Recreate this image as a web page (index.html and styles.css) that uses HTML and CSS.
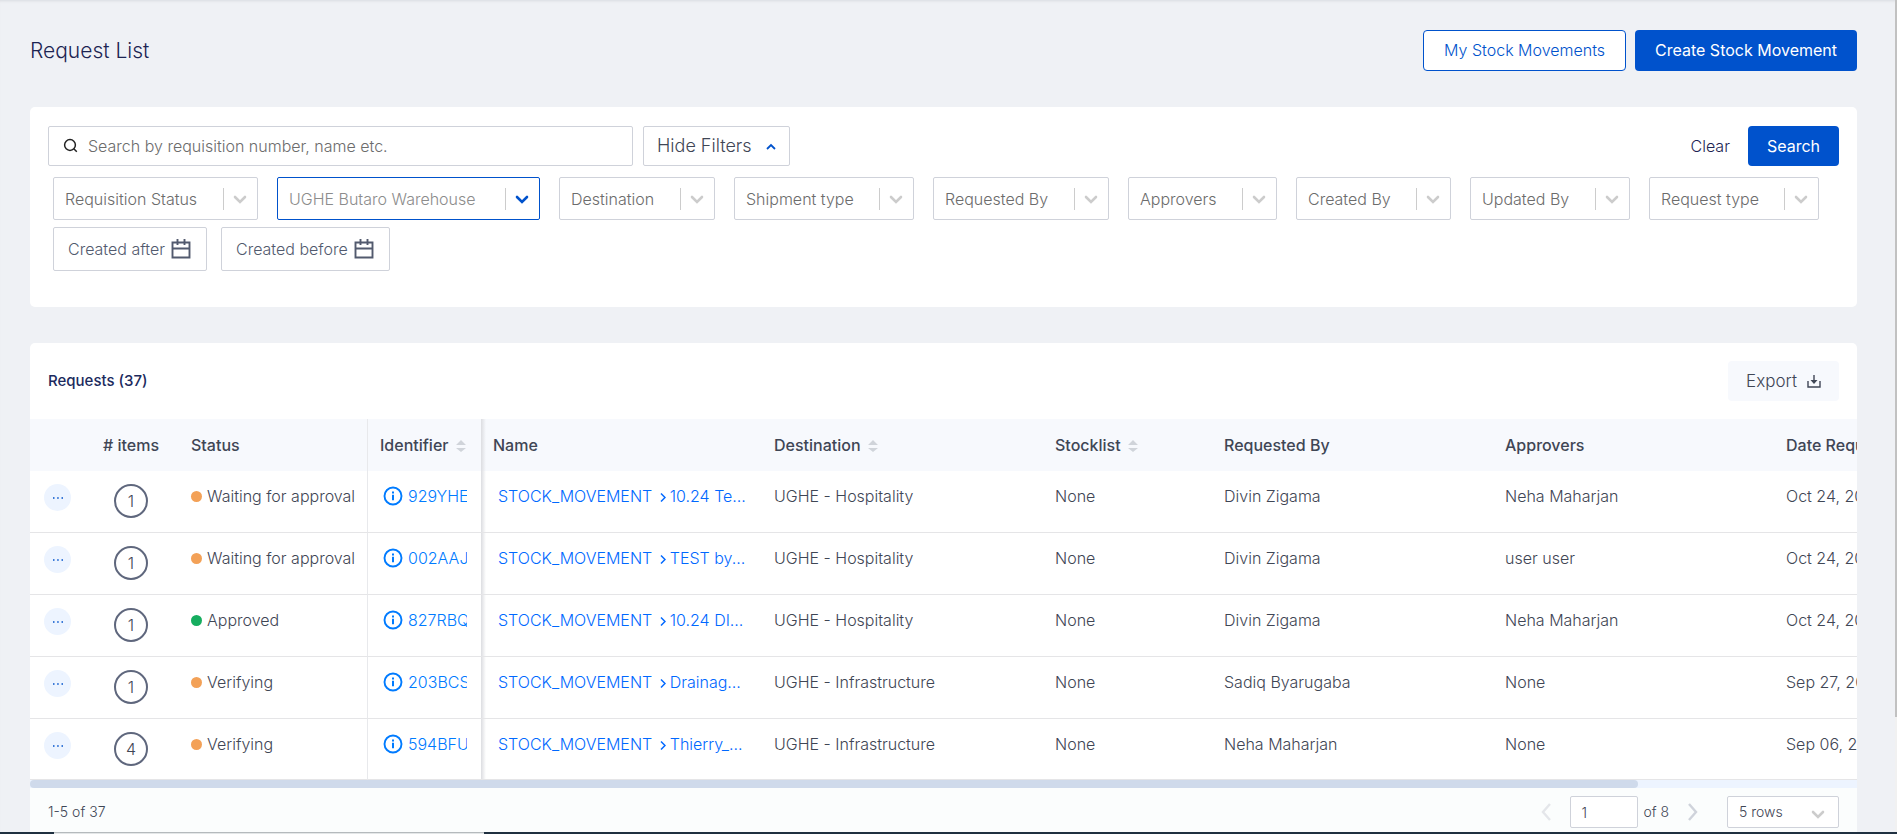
FILE: index.html
```html
<!DOCTYPE html>
<html lang="en">
<head>
  <meta charset="UTF-8">
  <meta name="viewport" content="width=device-width, initial-scale=1.0">
  <title>Request List</title>
  <link rel="stylesheet" href="styles.css">
</head>
<body>
  <!-- shared icons -->
  <svg class="icon-defs" width="0" height="0" aria-hidden="true">
    <symbol id="chevron" viewBox="0 0 14 9"><path d="M2 2l5 5 5-5" fill="none" stroke="currentColor" stroke-width="2.6" stroke-linecap="round"/></symbol>
    <symbol id="calendar" viewBox="0 0 20 20"><path d="M1.5 3.5h17v15h-17zM1.5 9.5h17M6.5 0v6M13.5 0v6" fill="none" stroke="currentColor" stroke-width="1.9"/></symbol>
    <symbol id="info" viewBox="0 0 20 20"><circle cx="10" cy="10" r="8.5" fill="none" stroke="currentColor" stroke-width="1.9"/><path d="M10 8.8v5.4M10 5.4v2" stroke="currentColor" stroke-width="2"/></symbol>
    <symbol id="sort" viewBox="0 0 10 12"><path d="M0 5l5-5 5 5zM0 8h10l-5 4z" fill="currentColor"/></symbol>
    <symbol id="crumb" viewBox="0 0 6 10"><path d="M1 1.500l4 4-4 4" fill="none" stroke="currentColor" stroke-width="1.500"/></symbol>
    <symbol id="dots" viewBox="0 0 12 4"><path d="M1 1.300h1.500v1.500H1zM5.200 1.300h1.500v1.500H5.200zM9.500 1.300H11v1.500H9.500z" fill="currentColor"/></symbol>
  </svg>

  <main class="page">
    <header class="page-header">
      <h1>Request List</h1>
      <div class="page-actions">
        <button type="button" class="btn btn-outline">My Stock Movements</button>
        <button type="button" class="btn btn-primary">Create Stock Movement</button>
      </div>
    </header>

    <form class="card filters">
      <div class="filters-top">
        <label class="search-box">
          <svg width="16" height="16" viewBox="0 0 16 16"><circle cx="7" cy="7" r="5.4" fill="none" stroke="#222" stroke-width="1.5"/><path d="M10.8 10.8l3 3" stroke="#222" stroke-width="1.5"/></svg>
          <input type="text" placeholder="Search by requisition number, name etc." aria-label="Search">
        </label>
        <button type="button" class="toggle-filters">Hide Filters
          <svg width="10" height="7" viewBox="0 0 10 7"><path d="M1 6l4-4 4 4" fill="none" stroke="#0052cc" stroke-width="1.8"/></svg>
        </button>
        <div class="filters-submit">
          <button type="button" class="btn-clear">Clear</button>
          <button type="submit" class="btn btn-primary">Search</button>
        </div>
      </div>
      <div class="filter-list">
        <div class="filter"><select aria-label="Requisition Status"><option>Requisition Status</option></select><svg><use href="#chevron"/></svg></div>
        <div class="filter active"><select aria-label="Origin"><option>UGHE Butaro Warehouse</option></select><svg><use href="#chevron"/></svg></div>
        <div class="filter"><select aria-label="Destination"><option>Destination</option></select><svg><use href="#chevron"/></svg></div>
        <div class="filter"><select aria-label="Shipment type"><option>Shipment type</option></select><svg><use href="#chevron"/></svg></div>
        <div class="filter"><select aria-label="Requested By"><option>Requested By</option></select><svg><use href="#chevron"/></svg></div>
        <div class="filter"><select aria-label="Approvers"><option>Approvers</option></select><svg><use href="#chevron"/></svg></div>
        <div class="filter"><select aria-label="Created By"><option>Created By</option></select><svg><use href="#chevron"/></svg></div>
        <div class="filter"><select aria-label="Updated By"><option>Updated By</option></select><svg><use href="#chevron"/></svg></div>
        <div class="filter"><select aria-label="Request type"><option>Request type</option></select><svg><use href="#chevron"/></svg></div>
      </div>
      <div class="date-list">
        <button type="button" class="date-filter">Created after <svg><use href="#calendar"/></svg></button>
        <button type="button" class="date-filter">Created before <svg><use href="#calendar"/></svg></button>
      </div>
    </form>

    <section class="card requests">
      <div class="requests-header">
        <h2>Requests (37)</h2>
        <button type="button" class="btn-export">Export
          <svg width="14" height="13" viewBox="0 0 14 13"><path d="M1 6v6h12V6M7 0v7" fill="none" stroke="currentColor" stroke-width="1.4"/><path d="M3.500 5h7L7 9z" fill="currentColor"/></svg>
        </button>
      </div>

      <div class="table-wrapper">
        <table>
          <colgroup>
            <col class="col-actions"><col class="col-items"><col class="col-status"><col class="col-id">
            <col class="col-wide"><col class="col-wide"><col class="col-stock"><col class="col-wide"><col class="col-wide"><col class="col-date">
          </colgroup>
          <thead>
            <tr>
              <th></th>
              <th class="center"># items</th>
              <th>Status</th>
              <th class="sticky">Identifier <svg class="sort"><use href="#sort"/></svg></th>
              <th>Name</th>
              <th>Destination <svg class="sort"><use href="#sort"/></svg></th>
              <th>Stocklist <svg class="sort"><use href="#sort"/></svg></th>
              <th>Requested By</th>
              <th>Approvers</th>
              <th>Date Requested</th>
            </tr>
          </thead>
          <tbody>
            <tr>
              <td><button type="button" class="row-menu" aria-label="Actions"><svg><use href="#dots"/></svg></button></td>
              <td><span class="count">1</span></td>
              <td><span class="dot waiting"></span>Waiting for approval</td>
              <td class="sticky"><a href="#" class="identifier"><svg><use href="#info"/></svg>929YHE</a></td>
              <td><a href="#" class="name">STOCK_MOVEMENT <svg><use href="#crumb"/></svg>10.24 Te...</a></td>
              <td>UGHE - Hospitality</td>
              <td>None</td>
              <td>Divin Zigama</td>
              <td>Neha Maharjan</td>
              <td>Oct 24, 2023</td>
            </tr>
            <tr>
              <td><button type="button" class="row-menu" aria-label="Actions"><svg><use href="#dots"/></svg></button></td>
              <td><span class="count">1</span></td>
              <td><span class="dot waiting"></span>Waiting for approval</td>
              <td class="sticky"><a href="#" class="identifier"><svg><use href="#info"/></svg>002AAJ</a></td>
              <td><a href="#" class="name">STOCK_MOVEMENT <svg><use href="#crumb"/></svg>TEST by...</a></td>
              <td>UGHE - Hospitality</td>
              <td>None</td>
              <td>Divin Zigama</td>
              <td>user user</td>
              <td>Oct 24, 2023</td>
            </tr>
            <tr>
              <td><button type="button" class="row-menu" aria-label="Actions"><svg><use href="#dots"/></svg></button></td>
              <td><span class="count">1</span></td>
              <td><span class="dot approved"></span>Approved</td>
              <td class="sticky"><a href="#" class="identifier"><svg><use href="#info"/></svg>827RBQ</a></td>
              <td><a href="#" class="name">STOCK_MOVEMENT <svg><use href="#crumb"/></svg>10.24 DI...</a></td>
              <td>UGHE - Hospitality</td>
              <td>None</td>
              <td>Divin Zigama</td>
              <td>Neha Maharjan</td>
              <td>Oct 24, 2023</td>
            </tr>
            <tr>
              <td><button type="button" class="row-menu" aria-label="Actions"><svg><use href="#dots"/></svg></button></td>
              <td><span class="count">1</span></td>
              <td><span class="dot waiting"></span>Verifying</td>
              <td class="sticky"><a href="#" class="identifier"><svg><use href="#info"/></svg>203BCS</a></td>
              <td><a href="#" class="name">STOCK_MOVEMENT <svg><use href="#crumb"/></svg>Drainag...</a></td>
              <td>UGHE - Infrastructure</td>
              <td>None</td>
              <td>Sadiq Byarugaba</td>
              <td>None</td>
              <td>Sep 27, 2023</td>
            </tr>
            <tr>
              <td><button type="button" class="row-menu" aria-label="Actions"><svg><use href="#dots"/></svg></button></td>
              <td><span class="count">4</span></td>
              <td><span class="dot waiting"></span>Verifying</td>
              <td class="sticky"><a href="#" class="identifier"><svg><use href="#info"/></svg>594BFU</a></td>
              <td><a href="#" class="name">STOCK_MOVEMENT <svg><use href="#crumb"/></svg>Thierry_...</a></td>
              <td>UGHE - Infrastructure</td>
              <td>None</td>
              <td>Neha Maharjan</td>
              <td>None</td>
              <td>Sep 06, 2023</td>
            </tr>
          </tbody>
        </table>
      </div>
      <div class="h-scroll"><div class="h-scroll-thumb"></div></div>

      <footer class="pagination">
        <span>1-5 of 37</span>
        <div class="pager">
          <button type="button" class="page-arrow prev" aria-label="Previous page" disabled><svg width="10" height="18" viewBox="0 0 10 18"><path d="M9 1L2 9l7 8" fill="none" stroke="currentColor" stroke-width="2.4"/></svg></button>
          <input type="text" value="1" aria-label="Page">
          <span>of 8</span>
          <button type="button" class="page-arrow next" aria-label="Next page"><svg width="10" height="18" viewBox="0 0 10 18"><path d="M1 1l7 8-7 8" fill="none" stroke="currentColor" stroke-width="2.4"/></svg></button>
          <div class="page-size"><select aria-label="Rows per page"><option>5 rows</option></select><svg><use href="#chevron"/></svg></div>
        </div>
      </footer>
    </section>
  </main>

  <div class="v-scroll"><div class="v-scroll-thumb"></div></div>
  <div class="taskbar"><div class="taskbar-tab"></div></div>
</body>
</html>
```
FILE: styles.css
```css
* {
  margin: 0;
  padding: 0;
  box-sizing: border-box;
}
body {
  background-color: #eff1f5;
  font-family: Inter, "Liberation Sans", sans-serif;
  font-size: 16px;
  font-weight: 300;
  line-height: 24px;
  color: #3f4655;
  height: 100vh;
  overflow: hidden;
}
button, input, select {
  font: inherit;
  color: inherit;
  background: none;
  border: none;
  outline: none;
}
button {
  cursor: pointer;
}
select {
  appearance: none;
}
a {
  text-decoration: none;
}
.icon-defs {
  position: absolute;
}
.page {
  padding: 30px 40px 0 30px;
  box-shadow: inset 0 3px 3px -2px #d9dbe0;
}

/* header */
.page-header {
  display: flex;
  justify-content: space-between;
  align-items: flex-start;
  margin-bottom: 36px;
}
h1 {
  font-size: 21px;
  font-weight: 300;
  line-height: 41px;
  color: #1c2452;
}
.page-actions {
  display: flex;
  gap: 9px;
}
.btn {
  height: 40px;
  padding: 0 19px;
  border-radius: 4px;
  white-space: nowrap;
}
.btn-primary {
  background-color: #0052cc;
  color: #fff;
  font-weight: 400;
}
.btn-outline {
  background-color: #fff;
  border: 1px solid #0052cc;
  color: #0052cc;
}
.page-actions .btn {
  height: 41px;
  padding: 0 20px 2px;
}
.card {
  background-color: #fff;
  border-radius: 5px;
}

/* filters */
.filters {
  padding: 19px 18px 36px;
  margin-bottom: 36px;
}
.filters-top {
  display: flex;
  gap: 10px;
}
.search-box {
  display: flex;
  align-items: center;
  gap: 9px;
  width: calc(33% - 6px);
  height: 40px;
  padding: 0 14px;
  border: 1px solid #cfd2da;
  border-radius: 2px;
}
.search-box input {
  flex: 1;
}
.search-box input::placeholder {
  color: #6c6c6c;
  opacity: 1;
}
.toggle-filters {
  display: flex;
  align-items: center;
  gap: 14px;
  height: 40px;
  padding: 0 13px;
  border: 1px solid #cfd2da;
  border-radius: 2px;
  font-size: 18px;
}
.filters-submit {
  display: flex;
  gap: 18px;
  margin-left: auto;
}
.btn-clear {
  color: #1c2452;
}
.filter-list {
  display: flex;
  flex-wrap: wrap;
  gap: 7px 19px;
  padding: 11px 5px 7px;
}
.filter {
  position: relative;
  color: #6c6c6c;
}
.filter select {
  height: 43px;
  padding: 0 59px 0 11px;
  border: 1px solid #cfd2da;
  border-radius: 2px;
}
/* divider before the chevron */
.filter::after {
  content: "";
  position: absolute;
  top: 11px;
  right: 34px;
  width: 1px;
  height: 22px;
  background-color: #ccc;
}
.filter svg {
  position: absolute;
  top: 18px;
  right: 11px;
  width: 14px;
  height: 9px;
  color: #ccc;
  pointer-events: none;
}
.filter.active {
  color: #8c8c8c;
}
.filter.active select {
  border-color: #0052cc;
  padding-right: 63px;
}
.filter.active svg {
  color: #0052cc;
}
.date-list {
  display: flex;
  gap: 14px;
  padding: 0 5px;
}
.date-filter {
  display: flex;
  align-items: center;
  gap: 6px;
  height: 44px;
  padding: 0 15px 0 14px;
  border: 1px solid #cfd2da;
  border-radius: 2px;
  color: #525a6e;
}
.date-filter svg {
  width: 20px;
  height: 20px;
}

/* requests table */
.requests {
  overflow: hidden;
}
.requests-header {
  display: flex;
  justify-content: space-between;
  align-items: center;
  padding: 18px;
}
h2 {
  font-size: 15px;
  font-weight: 500;
  color: #1c2a5e;
}
.btn-export {
  display: flex;
  align-items: center;
  gap: 10px;
  height: 40px;
  padding: 0 18px;
  border-radius: 4px;
  background-color: #f7f9fd;
  font-size: 17px;
}
.table-wrapper {
  overflow: hidden;
}
table {
  width: 2081px;
  table-layout: fixed;
  border-collapse: separate;
  border-spacing: 0;
}
.col-actions { width: 53px; }
.col-items { width: 96px; }
.col-status { width: 188px; }
.col-id { width: 114px; }
.col-wide { width: 281px; }
.col-stock { width: 169px; }
th {
  height: 52px;
  padding: 0 12px;
  background-color: #f7f9fd;
  font-weight: 500;
  text-align: left;
  white-space: nowrap;
}
th.center {
  text-align: center;
}
.sort {
  width: 10px;
  height: 12px;
  margin-left: 3px;
  vertical-align: -1px;
  color: #d0d4da;
}
td {
  height: 62px;
  padding: 13px 12px 0;
  border-bottom: 1px solid #e5e5e7;
  vertical-align: top;
  white-space: nowrap;
}
tbody tr:last-child td {
  height: 61px;
}
.sticky {
  position: relative;
  padding-right: 14px;
  border-left: 1px solid #e8e9ec;
}
/* shadow on the right edge of the pinned column */
.sticky::after {
  content: "";
  position: absolute;
  top: 0;
  left: 100%;
  width: 5px;
  height: 100%;
  background: linear-gradient(to right, #dcdde1, rgba(220, 221, 225, 0));
}
.row-menu {
  display: flex;
  align-items: center;
  justify-content: center;
  width: 27px;
  height: 27px;
  margin-left: 2px;
  border-radius: 50%;
  background-color: #edf4ff;
  color: #0052cc;
}
.row-menu svg {
  width: 12px;
  height: 4px;
}
.count {
  display: block;
  width: 34px;
  height: 34px;
  margin: 0 auto;
  border: 2px solid #5f677d;
  border-radius: 50%;
  line-height: 30px;
  text-align: center;
}
.dot {
  display: inline-block;
  width: 11px;
  height: 11px;
  margin-right: 5px;
  border-radius: 50%;
}
.dot.waiting {
  background-color: #f3a157;
}
.dot.approved {
  background-color: #16ad5f;
}
.identifier {
  display: flex;
  align-items: center;
  gap: 5px;
  margin-left: 3px;
  overflow: hidden;
  color: #007bff;
}
.identifier svg {
  flex: none;
  width: 20px;
  height: 20px;
}
.name {
  margin-left: 5px;
  color: #0068ff;
}
.name svg {
  width: 6px;
  height: 10px;
  margin: 0 4px 0 3px;
}
.h-scroll {
  height: 8px;
  background-color: #edf4ff;
}
.h-scroll-thumb {
  width: 88%;
  height: 8px;
  border-radius: 4px;
  background-color: #cfdaeb;
}

/* pagination */
.pagination {
  display: flex;
  justify-content: space-between;
  align-items: center;
  height: 60px;
  padding: 0 18px 12px;
  background-color: #fbfdfd;
  font-size: 14px;
}
.pager {
  display: flex;
  align-items: center;
}
.pager input {
  width: 68px;
  height: 32px;
  margin: 0 5px 0 19px;
  padding: 0 10px;
  border: 1px solid #cfd2da;
  border-radius: 2px;
  background-color: #fff;
}
.page-arrow {
  display: flex;
  color: #cfd3db;
}
.page-arrow.prev {
  color: #e4e6ea;
}
.page-arrow.next {
  margin: 0 29px 0 19px;
}
.page-size {
  position: relative;
}
.page-size select {
  width: 112px;
  height: 32px;
  padding: 0 11px;
  border: 1px solid #cfd2da;
  border-radius: 2px;
  background-color: #fff;
}
.page-size svg {
  position: absolute;
  top: 14px;
  right: 14px;
  width: 14px;
  height: 9px;
  color: #ccc;
  pointer-events: none;
}

/* window edges */
.v-scroll {
  position: fixed;
  top: 0;
  right: 0;
  width: 2px;
  height: 100%;
  background-color: #f1f1f1;
}
.v-scroll-thumb {
  height: 86%;
  background-color: #c1c1c1;
}
.taskbar {
  position: fixed;
  left: 0;
  right: 0;
  bottom: 0;
  height: 2px;
  padding-left: 54px;
  background-color: #1f3040;
}
.taskbar-tab {
  width: 430px;
  height: 2px;
  background-color: #e4e7e8;
  border-top: 1px solid #b5babd;
}
```
